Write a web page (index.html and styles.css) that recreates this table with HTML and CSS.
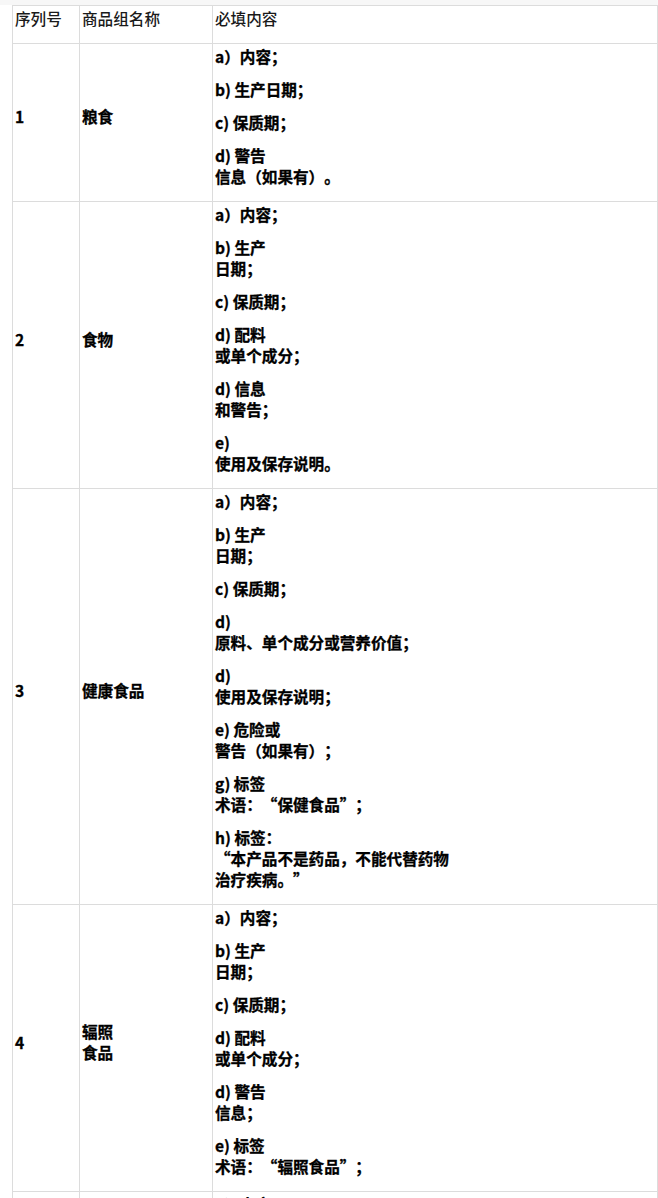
FILE: index.html
```html
<!DOCTYPE html>
<html lang="zh-CN">
<head>
<meta charset="utf-8">
<title>商品组必填内容</title>
<link rel="stylesheet" href="styles.css">
</head>
<body>
<div class="topstrip"></div>
<table class="goods">
  <colgroup>
    <col class="c-no">
    <col class="c-name">
    <col class="c-content">
  </colgroup>
  <thead>
    <tr>
      <th><p>序列号</p></th>
      <th><p>商品组名称</p></th>
      <th><p>必填内容</p></th>
    </tr>
  </thead>
  <tbody>
    <tr>
      <td><p>1</p></td>
      <td><p>粮食</p></td>
      <td>
        <p>a）内容；</p>
        <p>b) 生产日期；</p>
        <p>c) 保质期；</p>
        <p>d) 警告<br>信息（如果有）。</p>
      </td>
    </tr>
    <tr>
      <td><p>2</p></td>
      <td><p>食物</p></td>
      <td>
        <p>a）内容；</p>
        <p>b) 生产<br>日期；</p>
        <p>c) 保质期；</p>
        <p>d) 配料<br>或单个成分；</p>
        <p>d) 信息<br>和警告；</p>
        <p>e)<br>使用及保存说明。</p>
      </td>
    </tr>
    <tr>
      <td><p>3</p></td>
      <td><p>健康食品</p></td>
      <td>
        <p>a）内容；</p>
        <p>b) 生产<br>日期；</p>
        <p>c) 保质期；</p>
        <p>d)<br>原料、单个成分或营养价值；</p>
        <p>d)<br>使用及保存说明；</p>
        <p>e) 危险或<br>警告（如果有）；</p>
        <p>g) 标签<br>术语：“保健食品”；</p>
        <p>h) 标签：<br>“本产品不是药品，不能代替药物<br>治疗疾病。”</p>
      </td>
    </tr>
    <tr>
      <td><p>4</p></td>
      <td><p>辐照<br>食品</p></td>
      <td>
        <p>a）内容；</p>
        <p>b) 生产<br>日期；</p>
        <p>c) 保质期；</p>
        <p>d) 配料<br>或单个成分；</p>
        <p>d) 警告<br>信息；</p>
        <p>e) 标签<br>术语：“辐照食品”；</p>
      </td>
    </tr>
    <tr>
      <td><p>5</p></td>
      <td><p>&nbsp;</p></td>
      <td>
        <p>a）内容；</p>
        <p>b) 生产<br>日期；</p>
      </td>
    </tr>
  </tbody>
</table>
</body>
</html>
```

FILE: styles.css
```css
html, body {
  margin: 0;
  padding: 0;
  background: #ffffff;
}

body {
  padding: 0 1px 0 12px;
  font-family: "Noto Sans CJK SC", "Microsoft YaHei", sans-serif;
  font-size: 15.6px;
  line-height: 21px;
  color: #111111;
  text-spacing-trim: space-all;
}

.topstrip {
  height: 5px;
  margin-left: -12px;
  margin-right: -1px;
  background: #f7f7f7;
}

.goods {
  width: 645px;
  border-collapse: collapse;
  table-layout: fixed;
}

.c-no { width: 67px; }
.c-name { width: 133px; }
.c-content { width: 445px; }

.goods th,
.goods td {
  border: 1px solid #dcdcdc;
  padding: 2px 3px 2px 2px;
  text-align: left;
  vertical-align: middle;
}

.goods th {
  font-weight: 500;
  color: #1a1a1a;
}

.goods td {
  font-weight: 700;
  color: #000000;
  -webkit-text-stroke: 0.3px #000000;
}

.goods p {
  margin: 0 0 12px 0;
}
```
